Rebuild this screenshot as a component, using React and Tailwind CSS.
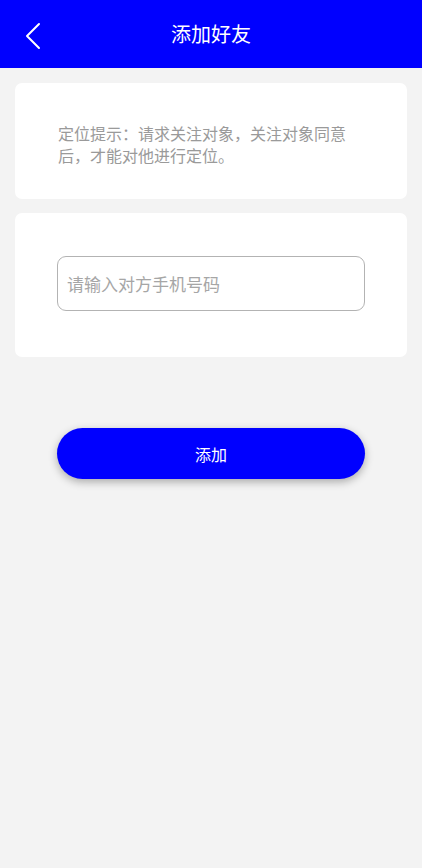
import { useState } from "react";

const BackIcon = () => (
    <svg width="18" height="28" viewBox="0 0 18 28" fill="none">
        <path d="M15 2 L3 14 L15 26" stroke="white" strokeWidth="2" strokeLinecap="round" strokeLinejoin="round" />
    </svg>
);

export default function App() {
    const [phone, setPhone] = useState("");

    return (
        <div
            className="min-h-[868px] w-full bg-[#f3f3f3]"
            style={{ fontFamily: '"Noto Sans CJK SC", "Noto Sans", sans-serif' }}
        >
            <div className="relative flex h-[68px] items-center justify-center bg-[#0000ff]">
                <button className="absolute left-[24px] top-[22px]">
                    <BackIcon />
                </button>
                <h1 className="text-[20px] leading-none text-white">添加好友</h1>
            </div>

            <div className="flex flex-col gap-[14px] px-[15px] pt-[15px]">
                <div className="h-[116px] rounded-[7px] bg-white pl-[43px] pr-[40px] pt-[39px]">
                    <p className="text-[16px] leading-[22px] text-[#9a9a9a]">
                        定位提示：请求关注对象，关注对象同意后，才能对他进行定位。
                    </p>
                </div>

                <div className="h-[144px] rounded-[7px] bg-white px-[42px] pt-[43px]">
                    <input
                        value={phone}
                        onChange={(ev) => setPhone(ev.target.value)}
                        placeholder="请输入对方手机号码"
                        className="h-[55px] w-full rounded-[9px] border border-[#b3b3b3] bg-white px-[9px] text-[17px] text-[#333] outline-none placeholder:text-[#a6a6a6]"
                    />
                </div>
            </div>

            <div className="px-[57px] pt-[71px]">
                <button className="h-[51px] w-full rounded-full bg-[#0000ff] text-[16px] text-white shadow-[0_3px_8px_rgba(0,0,0,0.3)]">
                    添加
                </button>
            </div>
        </div>
    );
}
